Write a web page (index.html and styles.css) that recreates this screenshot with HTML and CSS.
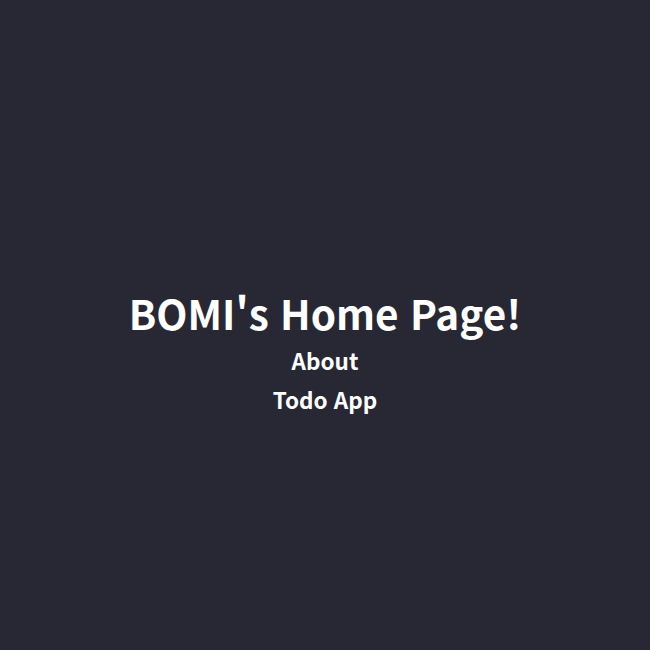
FILE: index.html
```html
<!DOCTYPE html>
<html lang="ko">
<head>
<meta charset="utf-8">
<title>BOMI's Home Page</title>
<link rel="stylesheet" href="styles.css">
</head>
<body>
<main class="home">
  <h1 class="title">BOMI's Home Page!</h1>
  <nav class="links">
    <a class="link" href="#">About</a>
    <a class="link" href="#">Todo App</a>
  </nav>
</main>
</body>
</html>
```
FILE: styles.css
```css
html, body {
  margin: 0;
  height: 100%;
}
body {
  background: #282834;
  color: #ffffff;
  font-family: "Noto Sans CJK KR", "Noto Sans", sans-serif;
}
.home {
  box-sizing: border-box;
  height: 100%;
  padding-top: 58px;
  display: flex;
  flex-direction: column;
  align-items: center;
  justify-content: center;
}
.title {
  margin: 0 0 4px;
  font-size: 40.5px;
  font-weight: 700;
  line-height: 1.2;
}
.links {
  display: flex;
  flex-direction: column;
  align-items: center;
}
.link {
  color: #ffffff;
  text-decoration: none;
  font-size: 22.5px;
  font-weight: 700;
  line-height: 39px;
}
```
